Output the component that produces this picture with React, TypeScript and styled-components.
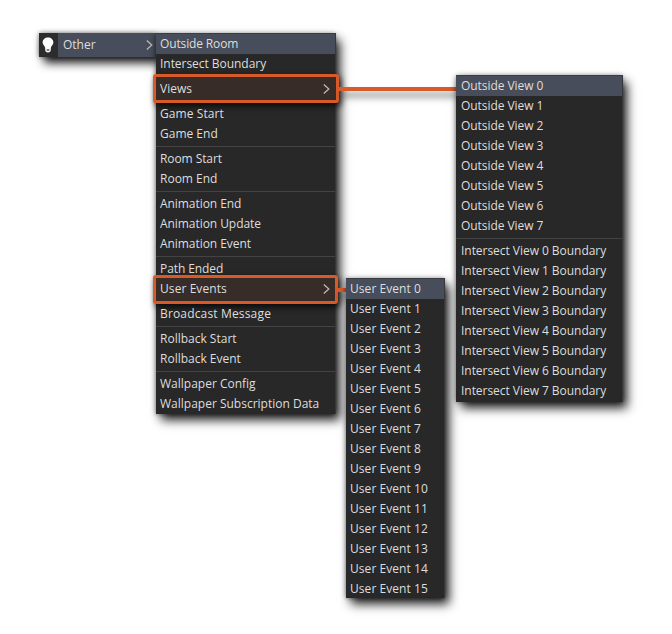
import React from "react";
import styled, { createGlobalStyle, css } from "styled-components";

const Global = createGlobalStyle`
  * { box-sizing: border-box; }
  body { margin: 0; background: #fff; overflow: hidden; }
`;

const shadow = "5px 6px 10px rgba(0,0,0,.88), 0 0 5px rgba(0,0,0,.5)";

const Stage = styled.main`
  display: flex;
  align-items: flex-start;
  width: 672px;
  height: 634px;
  padding: 33px 0 0 38.5px;
  background: #fff;
  color: #dedede;
  font: 12px/20px "Open Sans", "Noto Sans", sans-serif;
`;

const Trigger = styled.div`
  display: flex;
  width: 117.5px;
  height: 24px;
  background: #474d5a;
  box-shadow: ${shadow};
`;

const IconCell = styled.div`
  display: flex;
  align-items: center;
  justify-content: center;
  width: 19px;
  background: #2c2c2c;
`;

const TriggerLabel = styled.div`
  display: flex;
  flex: 1;
  align-items: center;
  justify-content: space-between;
  padding: 0 3px 0 5.5px;
`;

const Menu = styled.div<{ $width: number; $top: number; $left?: number; $height?: number }>`
  position: relative;
  flex: none;
  width: ${(p) => p.$width}px;
  ${(p) => p.$height && css`height: ${p.$height}px;`}
  margin: ${(p) => p.$top}px 0 0 ${(p) => p.$left ?? 0}px;
  background: #282828;
  box-shadow: 1px 0 0 #37383b, 0 -1px 0 #3b3d42, 1px -1px 0 #37383b, ${shadow};
`;

const Row = styled.div<{ $active?: boolean; $inset?: number; $tracking?: number }>`
  position: relative;
  display: flex;
  align-items: center;
  justify-content: space-between;
  height: 20px;
  padding: 0 5px 0 ${(p) => p.$inset ?? 4}px;
  letter-spacing: ${(p) => p.$tracking ?? 0}px;
  white-space: nowrap;
  ${(p) => p.$active && css`background: #474d5a;`}
`;

const Separator = styled.div`
  height: 5px;
  padding-top: 2px;
  &::before {
    content: "";
    display: block;
    height: 1px;
    background: #434343;
  }
`;

const Callout = styled.div<{ $top: number; $width: number; $reach: number; $line: number }>`
  position: absolute;
  top: ${(p) => p.$top}px;
  left: -3px;
  width: ${(p) => p.$width}px;
  height: 29px;
  border: 3px solid #d95a29;
  border-radius: 3px;
  background: #382c29;
  box-shadow: 2px 3px 6px rgba(0,0,0,.75);
  &::after {
    content: "";
    position: absolute;
    left: 100%;
    top: ${(p) => p.$line}px;
    margin-left: 2px;
    width: ${(p) => p.$reach}px;
    height: 4px;
    background: #d95a29;
    box-shadow: 3px 6px 7px rgba(0,0,0,.5);
  }
`;

const Chevron = () => (
  <svg width="7" height="10" viewBox="0 0 7 10" fill="none" stroke="#bbb8b7" strokeWidth="1.3">
    <path d="M.8.6 5.8 5 .8 9.4" />
  </svg>
);

const Bulb = () => (
  <svg width="12" height="16" viewBox="0 0 12 16">
    <path
      fill="#fff"
      d="M6 .4C2.9.4.6 2.5.6 5.4c0 2.3 2.3 3.4 2.6 5.6v1.8c0 1.7 1.2 2.6 2.8 2.6s2.8-.9 2.8-2.6V11c.3-2.2 2.6-3.3 2.6-5.6C11.4 2.5 9.1.4 6 .4Z"
    />
    <path d="M4.6 13h2.8" stroke="#2c2c2c" strokeWidth="1.2" />
  </svg>
);

const groups = [
  ["Outside Room", "Intersect Boundary"],
  ["Views"],
  ["Game Start", "Game End"],
  ["Room Start", "Room End"],
  ["Animation End", "Animation Update", "Animation Event"],
  ["Path Ended", "User Events"],
  ["Broadcast Message"],
  ["Rollback Start", "Rollback Event"],
  ["Wallpaper Config", "Wallpaper Subscription Data"],
];

const tracking: Record<string, number> = {
  "Outside Room": -0.14,
  "Intersect Boundary": -0.04,
  "Room Start": -0.08,
  "Animation End": -0.06,
  "Animation Update": -0.06,
  "Animation Event": -0.06,
  "Path Ended": -0.08,
  "User Events": 0.08,
  "Broadcast Message": 0.16,
  "Game Start": 0.08,
};

const eight = Array.from({ length: 8 }, (_, i) => i);
const userEvents = Array.from({ length: 16 }, (_, i) => `User Event ${i}`);

export default function App() {
  return (
    <>
      <Global />
      <Stage>
        <Trigger>
          <IconCell><Bulb /></IconCell>
          <TriggerLabel>Other<Chevron /></TriggerLabel>
        </Trigger>
        <Menu $width={179} $top={1}>
          <Callout $top={40} $width={186} $reach={118} $line={10} />
          <Callout $top={241} $width={185} $reach={9} $line={10} />
          {groups.map((items, g) => (
            <React.Fragment key={g}>
              {g > 0 && <Separator />}
              {items.map((label) => (
                <Row key={label} $active={label === "Outside Room"} $tracking={tracking[label]}>
                  {label}
                  {(label === "Views" || label === "User Events") && <Chevron />}
                </Row>
              ))}
            </React.Fragment>
          ))}
        </Menu>
        <Menu $width={98} $top={246} $left={11} $height={319}>
          {userEvents.map((label, i) => (
            <Row key={label} $active={i === 0} $tracking={0.06}>{label}</Row>
          ))}
        </Menu>
        <Menu $width={166} $top={43} $left={12} $height={326}>
          {eight.map((n) => (
            <Row key={n} $active={n === 0} $inset={5} $tracking={-0.06}>Outside View {n}</Row>
          ))}
          <Separator />
          {eight.map((n) => (
            <Row key={n} $inset={5} $tracking={-0.04}>Intersect View {n} Boundary</Row>
          ))}
        </Menu>
      </Stage>
    </>
  );
}
